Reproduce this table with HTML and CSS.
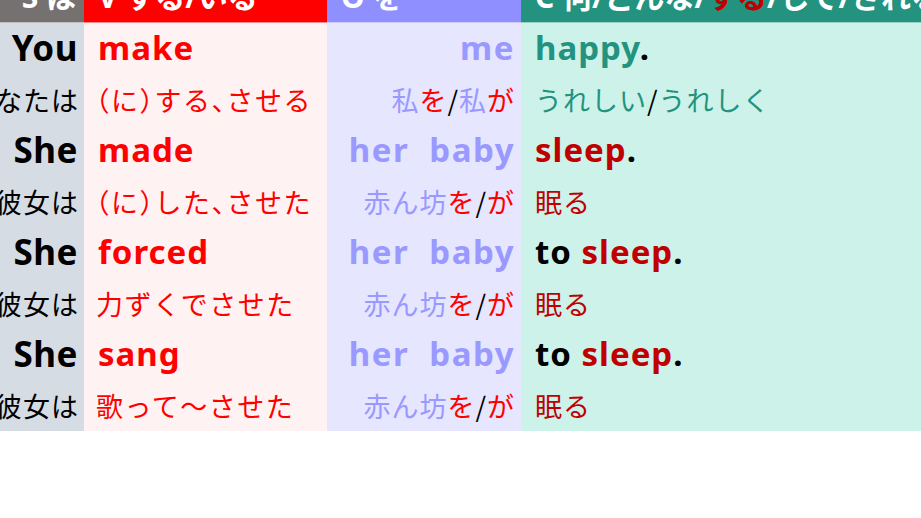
FILE: index.html
```html
<!DOCTYPE html>
<html lang="ja">
<head>
<meta charset="utf-8">
<title>SVOC</title>
<link rel="stylesheet" href="styles.css">
</head>
<body>
<div class="table">
  <div class="cell hd hd-s"><span>S は</span></div>
  <div class="cell hd hd-v"><span>V する/いる</span></div>
  <div class="cell hd hd-o"><span>O を</span></div>
  <div class="cell hd hd-c"><span>C 何/どんな/<span class="dred">する</span>/して/される</span></div>

  <div class="cell s en big"><span>You</span></div>
  <div class="cell v en"><span>make</span></div>
  <div class="cell o en"><span>me</span></div>
  <div class="cell c en"><span><span class="teal">happy</span>.</span></div>

  <div class="cell s ja"><span>あなたは</span></div>
  <div class="cell v ja"><span><span class="p">（</span>に<span class="p">）</span>する<span class="p">、</span>させる</span></div>
  <div class="cell o ja"><span>私<span class="red">を</span><span class="blk">/</span>私<span class="red">が</span></span></div>
  <div class="cell c ja"><span><span class="teal">うれしい</span><span class="blk">/</span><span class="teal">うれしく</span></span></div>

  <div class="cell s en big"><span>She</span></div>
  <div class="cell v en"><span>made</span></div>
  <div class="cell o en"><span>her baby</span></div>
  <div class="cell c en"><span><span class="dred">sleep</span>.</span></div>

  <div class="cell s ja"><span>彼女は</span></div>
  <div class="cell v ja"><span><span class="p">（</span>に<span class="p">）</span>した<span class="p">、</span>させた</span></div>
  <div class="cell o ja"><span>赤ん坊<span class="red">を</span><span class="blk">/</span><span class="red">が</span></span></div>
  <div class="cell c ja"><span><span class="dred">眠る</span></span></div>

  <div class="cell s en big"><span>She</span></div>
  <div class="cell v en"><span>forced</span></div>
  <div class="cell o en"><span>her baby</span></div>
  <div class="cell c en"><span>to <span class="dred">sleep</span>.</span></div>

  <div class="cell s ja"><span>彼女は</span></div>
  <div class="cell v ja"><span>力ずくでさせた</span></div>
  <div class="cell o ja"><span>赤ん坊<span class="red">を</span><span class="blk">/</span><span class="red">が</span></span></div>
  <div class="cell c ja"><span><span class="dred">眠る</span></span></div>

  <div class="cell s en big"><span>She</span></div>
  <div class="cell v en"><span>sang</span></div>
  <div class="cell o en"><span>her baby</span></div>
  <div class="cell c en"><span>to <span class="dred">sleep</span>.</span></div>

  <div class="cell s ja"><span>彼女は</span></div>
  <div class="cell v ja"><span>歌って～させた</span></div>
  <div class="cell o ja"><span>赤ん坊<span class="red">を</span><span class="blk">/</span><span class="red">が</span></span></div>
  <div class="cell c ja"><span><span class="dred">眠る</span></span></div>
</div>
</body>
</html>
```
FILE: styles.css
```css
html, body {
  margin: 0;
  padding: 0;
  background: #ffffff;
}
body {
  width: 921px;
  height: 518px;
  overflow: hidden;
  font-family: "Noto Sans", "Noto Sans CJK JP", sans-serif;
}
.table {
  display: grid;
  grid-template-columns: 84px 243px 194px 400px;
  grid-template-rows: 50px repeat(8, 51px);
  margin-top: -27px;
  width: 921px;
}
.cell {
  display: flex;
  align-items: center;
  white-space: nowrap;
  overflow: hidden;
  box-sizing: border-box;
}
.cell > span {
  flex: none;
}
.hd {
  color: #ffffff;
  font-weight: 700;
  font-size: 30px;
  padding-bottom: 5px;
  border-bottom: 1px solid rgba(255,255,255,0.55);
}
.hd-s { background: #767171; justify-content: flex-end; padding-right: 8px; }
.hd-v { background: #ff0000; padding-left: 14px; }
.hd-o { background: #8f8fff; padding-left: 14px; }
.hd-c { background: #23937f; padding-left: 14px; }
.en {
  font-size: 33px;
  font-weight: 700;
  letter-spacing: 1px;
  padding-bottom: 3px;
}
.en.big {
  font-size: 35px;
  letter-spacing: 0.5px;
}
.o.en { letter-spacing: 1.5px; word-spacing: 10px; }
.ja {
  font-family: "Noto Sans CJK JP", sans-serif;
  font-size: 27px;
  font-weight: 400;
  letter-spacing: 1px;
}
.v.ja { letter-spacing: 1.5px; }
.p { font-feature-settings: "halt"; }
.s { background: #d6dce4; color: #000000; justify-content: flex-end; padding-right: 6px; }
.v { background: #fff2f2; color: #ff0000; padding-left: 14px; }
.o { background: #e6e6ff; color: #9999ff; justify-content: flex-end; padding-right: 6px; }
.c { background: #ccf2ea; color: #000000; padding-left: 14px; }
.ja.v { padding-left: 12px; }
.ja.s { padding-right: 5px; }
.red { color: #ff0000; }
.dred { color: #c00000; }
.teal { color: #23937f; }
.blk { color: #000000; }
```
